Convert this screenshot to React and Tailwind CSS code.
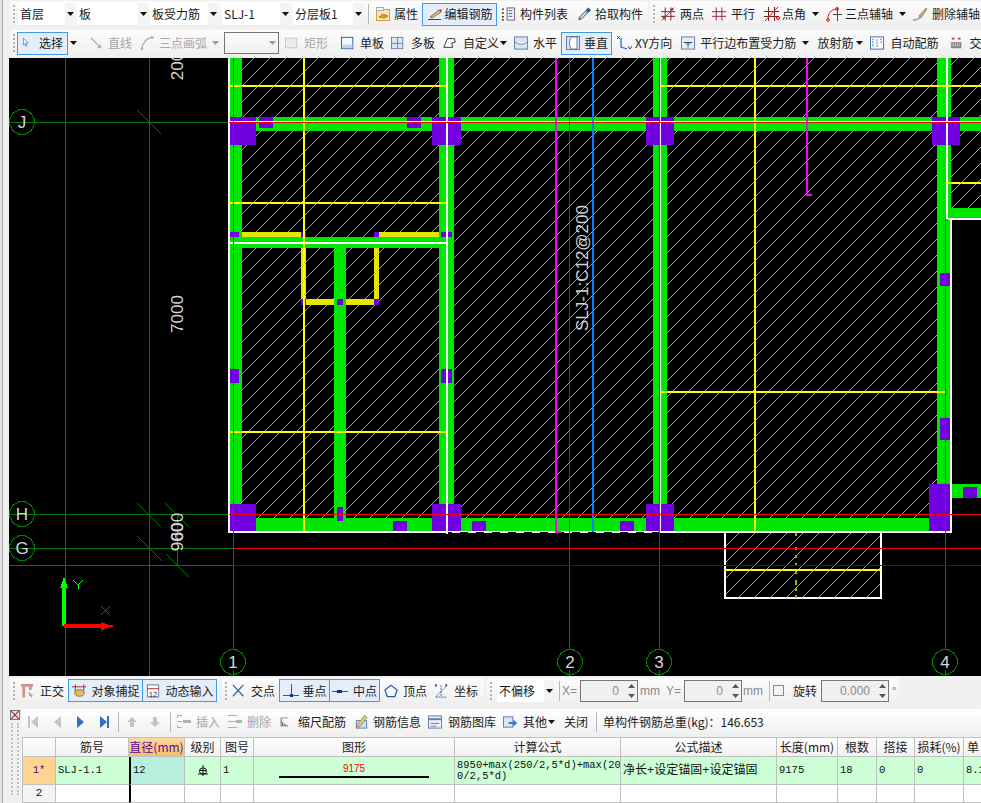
import React from 'react';
import clsx from 'clsx';

const cn = '[font-family:"Noto_Sans_CJK_SC","Liberation_Sans",sans-serif]';
const mono = '[font-family:"Liberation_Mono","Noto_Sans_CJK_SC",monospace]';

// canvas data, all in screenshot coordinates [x, y, w, h]
const greens = [
  [229, 58, 13, 474], [439, 58, 15, 474], [653, 58, 14, 474], [937, 58, 14, 161], [937, 219, 13, 312],
  [334, 247, 12, 271], [229, 117, 752, 14], [229, 237, 218, 11], [229, 518, 721, 13], [950, 208, 31, 10], [950, 484, 31, 14],
];
const purples = [
  [229, 117, 27, 28], [259, 117, 14, 11], [407, 117, 14, 11], [432, 117, 29, 28], [646, 117, 28, 28], [932, 117, 28, 28],
  [940, 273, 10, 13], [940, 418, 10, 22], [229, 232, 10, 5], [301, 232, 5, 5], [374, 232, 5, 5], [441, 232, 11, 5],
  [301, 299, 5, 6], [337, 299, 6, 6], [374, 299, 5, 6], [229, 369, 10, 14], [441, 369, 11, 14], [337, 507, 6, 14],
  [393, 521, 14, 10], [472, 521, 14, 10], [620, 521, 14, 10], [229, 504, 27, 27], [432, 504, 29, 27], [646, 504, 28, 27],
  [929, 484, 21, 47], [963, 487, 14, 11],
];
const yellowBars = [
  [242, 232, 59, 5], [379, 232, 60, 5], [301, 248, 5, 51], [374, 248, 5, 51], [306, 299, 28, 6], [346, 299, 28, 6],
];
const yellowLines = [
  [228, 85, 219, 2], [660, 85, 321, 2], [228, 202, 219, 2], [303, 58, 2, 474], [228, 431, 219, 2], [754, 58, 2, 474],
  [660, 391, 285, 2], [946, 182, 35, 2], [724, 569, 157, 2],
];
const whites = [
  [228, 58, 2, 475], [446, 58, 2, 476], [660, 58, 1, 475], [946, 58, 2, 161], [950, 219, 2, 314], [948, 218, 33, 2],
  [228, 242, 219, 2], [228, 531, 219, 2], [659, 531, 293, 2], [447, 531, 212, 1], [228, 121, 753, 1],
  [724, 532, 2, 67], [880, 532, 2, 67], [724, 597, 158, 2],
];
const axisLabels = [
  ['J', 22, 122], ['H', 22, 514], ['G', 22, 548], ['1', 233, 662], ['2', 570, 662], ['3', 659, 662], ['4', 945, 662],
];

const Rects = ({ items, fill }) => items.map((r, i) => (
  <rect key={i} x={r[0]} y={r[1]} width={r[2]} height={r[3]} fill={fill} />
));

const ring = (cx, cy) => {
  const pts = [];
  for (let i = 0; i < 12; i += 1) {
    const a = (i * Math.PI) / 6 + 0.26;
    pts.push(`${(cx + 12.5 * Math.cos(a)).toFixed(1)},${(cy + 12.5 * Math.sin(a)).toFixed(1)}`);
  }
  return pts.join(' ');
};

const Drawing = () => (
  <svg className="block w-[972px] h-[618px] shrink-0 bg-black" viewBox="9 58 972 618" shapeRendering="crispEdges">
    <defs>
      <pattern id="hatch" patternUnits="userSpaceOnUse" width="16" height="16" x="2" y="6">
        <line x1="0" y1="16" x2="16" y2="0" stroke="#a4a4a4" strokeWidth="1" />
      </pattern>
    </defs>
    {/* slab hatch */}
    <rect x="229" y="58" width="752" height="474" fill="url(#hatch)" />
    <rect x="952" y="219" width="29" height="320" fill="#000" />
    <rect x="725" y="533" width="156" height="65" fill="url(#hatch)" />

    {/* grid axes */}
    <g fill="#007a00">
      <rect x="9" y="122" width="220" height="1" />
      <rect x="9" y="514" width="220" height="1" />
      <rect x="9" y="548" width="224" height="1" />
      <rect x="9" y="565" width="224" height="1" />
      <rect x="65" y="58" width="1" height="618" />
      <rect x="149" y="58" width="1" height="618" />
      <rect x="177" y="514" width="1" height="52" />
    </g>
    <g stroke="#007a00" strokeWidth="1">
      <line x1="137" y1="110" x2="161" y2="134" />
      <line x1="137" y1="503" x2="161" y2="527" />
      <line x1="137" y1="536" x2="162" y2="561" />
      <line x1="165" y1="503" x2="189" y2="527" />
      <line x1="166" y1="554" x2="189" y2="577" />
    </g>

    <Rects items={greens} fill="#00e600" />
    <Rects items={purples} fill="#7000e0" />
    <Rects items={yellowBars} fill="#e6e600" />
    <Rects items={whites} fill="#fff" />
    <g fill="#fff">
      {[452, 468, 484, 500, 516, 532, 548, 564, 580, 596, 612, 628, 644].map((x) => <rect key={x} x={x} y="532" width="8" height="1" />)}
    </g>
    <Rects items={yellowLines} fill="#ffff00" />
    <g fill="#b0b000">
      {[533, 547, 555, 563, 571, 580, 588, 595].map((y) => <rect key={y} x="795" y={y} width="2" height={y === 580 ? 5 : 3} />)}
    </g>

    {/* bars */}
    <rect x="555" y="58" width="2" height="474" fill="#ff00ff" />
    <rect x="555" y="531" width="6" height="2" fill="#ff00ff" />
    <rect x="806" y="58" width="2" height="137" fill="#ff00ff" />
    <rect x="806" y="194" width="6" height="2" fill="#ff00ff" />
    <rect x="592" y="58" width="2" height="474" fill="#0080ff" />

    <g fill="#f00000">
      <rect x="233" y="58" width="1" height="592" />
      <rect x="569" y="58" width="1" height="592" />
      <rect x="659" y="58" width="1" height="592" />
      <rect x="945" y="219" width="1" height="431" />
      <rect x="229" y="122" width="752" height="1" />
      <rect x="229" y="514" width="752" height="1" />
      <rect x="233" y="548" width="748" height="1" />
      <rect x="233" y="670" width="1" height="6" />
      <rect x="569" y="670" width="1" height="6" />
      <rect x="659" y="670" width="1" height="6" />
      <rect x="945" y="670" width="1" height="6" />
    </g>
    <rect x="233" y="565" width="748" height="1" fill="#800000" />

    {/* axis bubbles */}
    {axisLabels.map(([t, x, y]) => (
      <g key={t}>
        <polygon points={ring(x, y)} fill="none" stroke="#008000" strokeWidth="1" />
        <text x={x} y={y + 6} textAnchor="middle" fontSize="17" fill="#d8d8d8" fontFamily="Liberation Sans, sans-serif">{t}</text>
      </g>
    ))}

    {/* dimension texts */}
    <g fill="#d4d4d4" fontSize="17" fontFamily="Liberation Sans, sans-serif" textAnchor="middle">
      <text transform="translate(183 66) rotate(-90)">200</text>
      <text transform="translate(183 314) rotate(-90)">7000</text>
      <text transform="translate(183 537) rotate(-90)">900</text>
      <text transform="translate(183 527) rotate(-90)">600</text>
      <text transform="translate(588 268) rotate(-90)">SLJ-1:C12@200</text>
    </g>

    {/* ucs */}
    <rect x="62" y="583" width="4" height="43" fill="#00ff00" />
    <polygon points="64,577 68,588 60,588" fill="#00ff00" />
    <rect x="64" y="624" width="38" height="4" fill="#ff0000" />
    <polygon points="101,622 109,625 113,625 113,627 109,627 101,631" fill="#ff0000" />
    <g stroke="#00ff00">
      <line x1="73" y1="580" x2="78" y2="585" />
      <line x1="83" y1="580" x2="78" y2="585" />
      <line x1="78" y1="585" x2="78" y2="589" />
    </g>
    <g stroke="#ff0000">
      <line x1="101" y1="606" x2="110" y2="615" />
      <line x1="110" y1="606" x2="101" y2="615" />
    </g>
  </svg>
);

// small toolbar icons
const Ico = ({ w = 16, children }) => (
  <svg className="shrink-0 block" width={w} height="16" viewBox="0 0 16 16" fill="none">{children}</svg>
);
const grayA = '#b0b0b0';
const icons = {
  prop: <Ico><rect x="1.500" y="3.500" width="13" height="11" fill="#fbe3b4" stroke="#e59a3c" /><rect x="1.500" y="1.500" width="7" height="3" fill="#f4f4f4" stroke="#aaa" /><path d="M4 11l4-3 5 2-4 2z" fill="#c9a227" stroke="#7a5f10" strokeWidth=".6" /></Ico>,
  pen: <Ico><path d="M1 13.500h13" stroke="#444" /><path d="M3 11l9-7 2 2-9 6z" fill="#e8c36a" stroke="#555" strokeWidth=".8" /><path d="M12 4l2-1 1 2-1 1z" fill="#d04040" /></Ico>,
  list: <Ico w={15}><rect x="6.500" y="1.500" width="8" height="13" fill="#eef3fa" stroke="#667" /><path d="M8 4.500h4M8 7.500h4M8 10.500h4" stroke="#557" /><path d="M1 3h2M1 7h2M1 11h2M1 14h2" stroke="#334" strokeWidth="1.600" strokeDasharray="2 1" /></Ico>,
  dropper: <Ico w={15}><path d="M2 14l1-3 6-6 2 2-6 6z" fill="#cfe3f7" stroke="#345" /><path d="M9 4l3-3 3 3-3 3z" fill="#2b5c9a" /></Ico>,
  twoPt: <Ico w={15}><path d="M4.500 1v14M10.500 1v14M0 5.500h15M0 10.500h15" stroke="#7a1f1f" /><path d="M1 15L14 1" stroke="#1a8a1a" /><circle cx="3" cy="12" r="1.200" fill="#c00" /><circle cx="12" cy="3" r="1.200" fill="#c00" /></Ico>,
  para: <Ico w={15}><path d="M4.500 1v14M10.500 1v14M0 5.500h15M0 10.500h15" stroke="#9b1c3c" /></Ico>,
  angle: <Ico><path d="M4.500 1v14M10.500 1v14M0 5.500h15M0 10.500h15" stroke="#7a1f1f" /><path d="M1 15L14 1" stroke="#e01010" /><circle cx="14" cy="12" r="1.500" stroke="#c00" /></Ico>,
  arcAxis: <Ico><path d="M2 15C1 8 5 3 11 3" stroke="#e01010" /><circle cx="2" cy="14" r="1.300" fill="#fff" stroke="#c00" /><circle cx="11" cy="3" r="1.300" fill="#fff" stroke="#c00" /><path d="M11.500 1v14M7 8.500h9" stroke="#444" /></Ico>,
  brush: <Ico><path d="M1 14c3 0 5 0 7-3" stroke="#9ab" strokeWidth="2" /><path d="M7 10l7-8 1 1-6 9z" fill="#d6b25a" stroke="#665" strokeWidth=".6" /></Ico>,
  cursor: <Ico w={11}><path d="M2 1l7 7H5.500L7 12l-1.500.6L4 9l-2 2z" fill="#fff" stroke="#4a6a9a" /></Ico>,
  line: <Ico w={14}><path d="M1 2l11 11" stroke={grayA} strokeWidth="1.500" /><path d="M13 14l-5-1 4-4z" fill={grayA} /></Ico>,
  arc: <Ico w={15}><path d="M2 14C3 7 7 3 13 2" stroke={grayA} strokeWidth="1.500" /><circle cx="2" cy="14" r="1.500" fill={grayA} /><circle cx="13" cy="2" r="1.500" fill={grayA} /></Ico>,
  rect: <Ico w={14}><rect x=".5" y="2.500" width="13" height="11" fill="#ececec" stroke="#c4c4c4" /></Ico>,
  single: <Ico w={14}><rect x=".5" y="1.500" width="13" height="13" fill="#f4f8fd" stroke="#1f4e9c" /><rect x="1" y="10" width="12" height="4" fill="#bcd3f0" /></Ico>,
  multi: <Ico w={14}><rect x=".5" y="1.500" width="13" height="13" fill="#dbe7f6" stroke="#5f7da8" /><path d="M7.500 2v12M1 8.500h12" stroke="#5f7da8" /></Ico>,
  custom: <Ico w={14}><path d="M1 13L5 3h8l1 4-4 1 1 5z" fill="#fff" stroke="#222" /></Ico>,
  horiz: <Ico w={15}><rect x=".5" y="1.500" width="14" height="13" fill="#d9e6f5" stroke="#5f7da8" /><path d="M1 7c4 3 9 3 13 0" fill="#fff" stroke="#5f7da8" /></Ico>,
  vert: <Ico><rect x="1.500" y="1.500" width="13" height="13" fill="#d9e6f5" stroke="#5f7da8" /><path d="M6 2c-2 4-2 8 0 12h6V2z" fill="#fff" stroke="#5f7da8" /></Ico>,
  xy: <Ico><path d="M5 3v9l6 2" stroke="#2d6fc0" strokeWidth="1.300" /><path d="M1 1l3 3M4 1L1 4M12 11l2 3 2-3" stroke="#222" strokeWidth=".8" /></Ico>,
  edge: <Ico w={15}><rect x=".5" y="1.500" width="14" height="13" fill="#e4eefa" stroke="#5f7da8" /><path d="M3 7.500h9" stroke="#333" /><path d="M7.500 8v5M5.500 10l2-2 2 2" stroke="#2d6fc0" /></Ico>,
  auto: <Ico w={15}><rect x=".5" y="1.500" width="14" height="13" fill="#fff" stroke="#3c66a8" /><path d="M4 4H3v8h1M7.500 4v8M11 4h1v4" stroke="#3c66a8" strokeDasharray="2 1" /></Ico>,
  crossTb: <Ico w={14}><rect x="1" y="7" width="12" height="7" fill="#888" /><path d="M2 9h10M2 11h10" stroke="#fff" strokeDasharray="1 1" /><path d="M2 3h3M9 3h3" stroke="#c33" strokeWidth="2" /></Ico>,
  ortho: <Ico w={15}><path d="M1 2h13M4 2v13M11 2v5" stroke="#d89090" strokeWidth="3" /><path d="M9 9l4 4-1 1-2-2" fill="#99aabb" stroke="#667" strokeWidth=".6" /></Ico>,
  snap: <Ico w={15}><path d="M3.500 1v9M12.500 1v9M0 3.500h15" stroke="#8a3030" /><ellipse cx="8" cy="10" rx="5" ry="3.600" fill="#e2b860" stroke="#9a7a30" /></Ico>,
  dyn: <Ico w={15}><rect x="1.500" y="1.500" width="12" height="13" fill="#fff" stroke="#777" /><path d="M1 5.500h13" stroke="#a33" /><text x="3" y="14" fontSize="8" fill="#222" fontFamily="Liberation Sans, sans-serif">12</text></Ico>,
  cross: <Ico w={14}><path d="M1 1l12 13M13 1L1 14" stroke="#225ea8" strokeWidth="1.300" /></Ico>,
  foot: <Ico><path d="M0 12.500h16" stroke="#225ea8" /><path d="M8.500 1v11" stroke="#225ea8" /><rect x="7" y="11" width="3" height="3" fill="#123a70" /></Ico>,
  mid: <Ico><path d="M0 8.500h16" stroke="#225ea8" /><rect x="5" y="7" width="5" height="3" fill="#123a70" /></Ico>,
  vertex: <Ico w={15}><path d="M7.500 2L14 7l-2.500 7h-8L1 7z" stroke="#225ea8" strokeWidth="1.300" /></Ico>,
  coord: <Ico w={15}><path d="M2 14.500h12M7.500 2v12M2 14L13 3" stroke="#225ea8" strokeDasharray="2 1" /><rect x="1" y="1" width="2" height="2" fill="#123a70" /><rect x="12" y="1" width="2" height="2" fill="#123a70" /></Ico>,
  ins: <Ico><path d="M1 1.500h5M1 7.500h5M1 13.500h5M1.500 1v3M1.500 11v3" stroke={grayA} /><path d="M7 7.500h8" stroke={grayA} strokeWidth="3" /></Ico>,
  del: <Ico><path d="M1 1.500h9M1 7.500h9M1 13.500h9" stroke={grayA} /><path d="M9 7.500h6" stroke={grayA} strokeWidth="3" /></Ico>,
  scale: <Ico w={12}><path d="M1.500 2v12M3.500 8v6M5.500 10v4M7.500 11v3M9.500 12v2" stroke="#333" /><path d="M3 2.500h8" stroke="#a33" strokeDasharray="3 1" /></Ico>,
  info: <Ico w={15}><rect x="2.500" y="6.500" width="11" height="8" fill="#cfe0f3" stroke="#5f7da8" /><path d="M2 13L11 1l3 2-8 10z" fill="#e6c66f" stroke="#776" strokeWidth=".7" /></Ico>,
  lib: <Ico w={15}><rect x=".5" y="1.500" width="14" height="13" fill="#e8eff8" stroke="#5f7da8" /><path d="M1 5h13" stroke="#5f7da8" strokeWidth="2" /><path d="M3 9.500h9M3 12.500h6" stroke="#776" /></Ico>,
  other: <Ico w={15}><rect x=".5" y="2.500" width="10" height="11" fill="#dbe7f6" stroke="#5f7da8" /><path d="M6 8h5V5l4 4-4 4v-3H6z" fill="#3a78c8" /></Ico>,
};

const Caret = ({ className, gray }) => (
  <svg className={clsx('shrink-0 block', className)} width="7" height="4" viewBox="0 0 7 4"><path d="M0 0h7L3.500 4z" fill={gray ? '#9a9a9a' : '#111'} /></svg>
);
const Grip = ({ className }) => <div className={clsx('h-[18px] w-[2px] border-l-2 border-dotted border-[#b0b0b0]', className)} />;
const Sep = ({ className }) => <div className={clsx('h-[20px] w-px bg-[#b8b8b8]', className)} />;

const Btn = ({ icon, label, gap = 'gap-[4px]', className, on, off }) => (
  <div className={clsx(
    'flex items-center h-[23px] shrink-0 whitespace-nowrap text-[12px] leading-none', gap,
    on && 'border border-[#3d9be9] bg-[#e3eefa] justify-center',
    off ? 'text-[#a6a6a6]' : 'text-[#1c1c1c]',
    className,
  )}>
    {icon}
    {label && <span>{label}</span>}
  </div>
);

const Combo = ({ label, className }) => (
  <div className={clsx('flex h-[22px] shrink-0 bg-white text-[12px] text-[#1c1c1c] leading-none whitespace-nowrap', className)}>
    <span className="flex-1 flex items-center pl-[2px]">{label}</span>
    <span className="w-[10px] bg-[#f3f3f3] flex items-center justify-center"><Caret /></span>
  </div>
);

const Bar = ({ className, children }) => (
  <div className={clsx('flex items-center h-[26px] shrink-0 rounded-[2px] bg-linear-to-b from-[#fcfcfc] to-[#efefef]', className)}>{children}</div>
);

const Spin = ({ value, className }) => (
  <div className={clsx('flex items-center h-[22px] shrink-0 border border-[#767676] bg-[#f0f0f0] text-[12px] text-[#8a8a8a]', className)}>
    <span className="flex-1 text-right pr-[6px] [font-family:'Liberation_Sans',sans-serif]">{value}</span>
    <span className="w-[12px] flex flex-col items-center gap-[6px]">
      <svg width="7" height="4" viewBox="0 0 7 4"><path d="M3.500 0L7 4H0z" fill="#555" /></svg>
      <svg width="7" height="4" viewBox="0 0 7 4"><path d="M0 0h7L3.500 4z" fill="#555" /></svg>
    </span>
  </div>
);

const TopToolbars = () => (
  <div className={clsx('h-[58px] shrink-0 overflow-hidden bg-[#f0f0f0]', cn)}>
    <div className="flex h-[28px] pt-px">
      <Bar className="ml-px w-[638px]">
        <Grip className="ml-[3px]" />
        <Combo label="首层" className="ml-[3px] w-[57px]" />
        <Combo label="板" className="ml-[2px] w-[71px]" />
        <Combo label="板受力筋" className="ml-[2px] w-[68px]" />
        <Combo label="SLJ-1" className="ml-[4px] w-[68px]" />
        <Combo label="分层板1" className="ml-[3px] w-[70px]" />
        <Sep className="ml-[5px]" />
        <Btn icon={icons.prop} label="属性" gap="gap-[3px]" className="ml-[6px]" />
        <Btn icon={icons.pen} label="编辑钢筋" gap="gap-[2px]" on className="ml-[4px] w-[75px]" />
        <Btn icon={icons.list} label="构件列表" className="ml-[4px]" />
        <Btn icon={icons.dropper} label="拾取构件" gap="gap-[3px]" className="ml-[9px]" />
      </Bar>
      <Bar className="ml-[2px] w-[331px]">
        <Grip className="ml-[3px]" />
        <Btn icon={icons.twoPt} label="两点" className="ml-[6px]" />
        <Btn icon={icons.para} label="平行" className="ml-[8px]" />
        <Btn icon={icons.angle} label="点角" gap="gap-[2px]" className="ml-[9px]" />
        <Caret className="ml-[6px]" />
        <Btn icon={icons.arcAxis} label="三点辅轴" gap="gap-[3px]" className="ml-[7px]" />
        <Caret className="ml-[6px]" />
        <Btn icon={icons.brush} label="删除辅轴" className="ml-[6px]" />
      </Bar>
    </div>
    <div className="flex h-[30px] pt-[2px]">
      <Bar className="ml-px w-[971px]">
        <Grip className="ml-[3px]" />
        <Btn icon={icons.cursor} label="选择" gap="gap-[6px]" on className="ml-[2px] w-[51px]" />
        <Caret className="ml-[2px]" />
        <Sep className="ml-[6px]" />
        <Btn icon={icons.line} label="直线" off className="ml-[7px]" />
        <Btn icon={icons.arc} label="三点画弧" off className="ml-[8px]" />
        <Caret gray className="ml-[5px]" />
        <div className="ml-[5px] w-[55px] h-[22px] shrink-0 border border-[#767676] flex items-center justify-end pr-[2px]"><Caret gray /></div>
        <Btn icon={icons.rect} label="矩形" gap="gap-[5px]" off className="ml-[6px]" />
        <Sep className="ml-[7px]" />
        <Btn icon={icons.single} label="单板" gap="gap-[5px]" className="ml-[6px]" />
        <Btn icon={icons.multi} label="多板" gap="gap-[6px]" className="ml-[7px]" />
        <Btn icon={icons.custom} label="自定义" gap="gap-[6px]" className="ml-[8px]" />
        <Caret className="ml-px" />
        <Btn icon={icons.horiz} label="水平" className="ml-[7px]" />
        <Btn icon={icons.vert} label="垂直" gap="gap-[3px]" on className="ml-[4px] w-[51px]" />
        <Btn icon={icons.xy} label="XY方向" gap="gap-[3px]" className="ml-[4px]" />
        <Btn icon={icons.edge} label="平行边布置受力筋" className="ml-[9px]" />
        <Caret className="ml-[6px]" />
        <Btn label="放射筋" className="ml-[8px]" />
        <Caret className="ml-[3px]" />
        <Btn icon={icons.auto} label="自动配筋" gap="gap-[5px]" className="ml-[7px]" />
        <Sep className="ml-[7px]" />
        <Btn icon={icons.crossTb} label="交" gap="gap-[5px]" className="ml-[5px]" />
      </Bar>
    </div>
  </div>
);

const SnapToolbar = () => (
  <div className={clsx('flex items-center h-[32px] pb-[3px] shrink-0 bg-[#f0f0f0]', cn)}>
    <Bar className="ml-px w-[209px]">
      <Grip className="ml-[3px]" />
      <Btn icon={icons.ortho} label="正交" gap="gap-[5px]" className="ml-[5px]" />
      <Btn icon={icons.snap} label="对象捕捉" gap="gap-[5px]" on className="ml-[4px] w-[75px]" />
      <Btn icon={icons.dyn} label="动态输入" gap="gap-[5px]" on className="w-[75px] -ml-px" />
    </Bar>
    <Bar className="ml-[3px] w-[262px]">
      <Grip className="ml-[3px]" />
      <Btn icon={icons.cross} label="交点" gap="gap-[5px]" className="ml-[5px]" />
      <Btn icon={icons.foot} label="垂点" on className="ml-[4px] w-[51px]" />
      <Btn icon={icons.mid} label="中点" gap="gap-[5px]" on className="w-[51px] -ml-px" />
      <Btn icon={icons.vertex} label="顶点" className="ml-[4px]" />
      <Btn icon={icons.coord} label="坐标" gap="gap-[5px]" className="ml-[7px]" />
    </Bar>
    <Bar className="ml-[3px] w-[412px]">
      <Grip className="ml-[3px]" />
      <Combo label="不偏移" className="ml-[5px] w-[57px]" />
      <Sep className="ml-[5px]" />
      <span className="ml-[2px] w-[17px] text-[12px] text-[#8a8a8a] [font-family:'Liberation_Sans',sans-serif]">X=</span>
      <Spin value="0" className="ml-px w-[58px]" />
      <span className="ml-[2px] w-[24px] text-[12px] text-[#8a8a8a] [font-family:'Liberation_Sans',sans-serif]">mm</span>
      <span className="ml-[2px] w-[18px] text-[12px] text-[#8a8a8a] [font-family:'Liberation_Sans',sans-serif]">Y=</span>
      <Spin value="0" className="w-[58px]" />
      <span className="ml-px w-[24px] text-[12px] text-[#8a8a8a] [font-family:'Liberation_Sans',sans-serif]">mm</span>
      <Sep className="ml-[2px]" />
      <div className="ml-[3px] w-[11px] h-[11px] shrink-0 border border-[#8a8a8a] bg-[#f4f4f4]" />
      <span className="ml-[9px] text-[12px] text-[#1c1c1c] whitespace-nowrap">旋转</span>
      <Spin value="0.000" className="ml-[4px] w-[68px]" />
      <span className="ml-[3px] text-[12px] text-[#777]">°</span>
    </Bar>
  </div>
);

const GRID = 'grid grid-cols-[33px_73px_56px_36px_33px_201px_166px_156px_61px_39px_38px_49px_40px]';
const cell = 'border-r border-b border-[#c0c0c0] flex items-center overflow-hidden whitespace-nowrap';
const headers = ['', '筋号', '直径(mm)', '级别', '图号', '图形', '计算公式', '公式描述', '长度(mm)', '根数', '搭接', '损耗(%)', '单'];

const RebarTable = () => (
  <div className="w-[959px] overflow-hidden border-t border-l border-[#c0c0c0] bg-white">
    <div className={clsx(GRID, 'h-[19px]')}>
      {headers.map((h, i) => (
        <div
          key={i}
          className={clsx(
            cell, 'justify-center text-[12px] leading-none',
            i === 2 ? 'bg-linear-to-b from-[#fbd9a0] to-[#f4bf6a] text-[#5a0a8c]' : 'bg-linear-to-b from-white to-[#f1f1f1] text-[#1c1c1c]',
            i === 12 && 'justify-start pl-[3px]',
          )}
        >
          {h}
        </div>
      ))}
    </div>
    <div className={clsx(GRID, 'h-[28px] text-[10.5px] text-[#111] bg-[#ccffd6]', mono)}>
      <div className={clsx(cell, 'justify-center bg-[#ffd490] text-[#5a0a8c]')}>1*</div>
      <div className={clsx(cell, 'pl-[2px] border-r-0')}>SLJ-1.1</div>
      <div className={clsx(cell, 'pl-[2px] bg-[#b6f0dc] border-l-2 border-l-black')}>12</div>
      <div className={clsx(cell, 'justify-center')}>
        <svg width="10" height="11" viewBox="0 0 10 11" fill="none"><path d="M5 0v11M2 5.500h6M0 9h10" stroke="#111" /><rect x="1.500" y="3" width="7" height="6" rx="3" stroke="#111" /></svg>
      </div>
      <div className={clsx(cell, 'pl-[2px]')}>1</div>
      <div className={clsx(cell, 'flex-col justify-center')}>
        <span className="text-[#f00000] text-[10px] leading-[12px] [font-family:'Liberation_Sans',sans-serif]">9175</span>
        <span className="block w-[150px] h-[2px] bg-black mt-[1px]" />
      </div>
      <div className={clsx(cell, 'pl-[2px] leading-[11px] whitespace-pre')}>{'8950+max(250/2,5*d)+max(20\n0/2,5*d)'}</div>
      <div className={clsx(cell, 'pl-[2px] text-[12px]')}>净长+设定锚固+设定锚固</div>
      <div className={clsx(cell, 'pl-[2px]')}>9175</div>
      <div className={clsx(cell, 'pl-[2px]')}>18</div>
      <div className={clsx(cell, 'pl-[2px]')}>0</div>
      <div className={clsx(cell, 'pl-[2px]')}>0</div>
      <div className={clsx(cell, 'pl-[2px]')}>8.18</div>
    </div>
    <div className={clsx(GRID, 'h-[18px] text-[11px] text-[#111]', mono)}>
      <div className={clsx(cell, 'justify-center bg-[#f3f3f3]')}>2</div>
      <div className={clsx(cell, 'border-r-0')} />
      <div className={clsx(cell, 'border-l-2 border-l-black')} />
      {[0, 1, 2, 3, 4, 5, 6, 7, 8, 9].map((i) => <div key={i} className={cell} />)}
    </div>
  </div>
);

const RebarPanel = () => (
  <div className={clsx('flex h-[95px] shrink-0 bg-[#f0f0f0]', cn)}>
    <div className="w-[13px] shrink-0 pl-px pt-[2px] bg-[#f0f0f0]">
      <div className="w-[10px] h-[10px] border border-[#777] bg-[#e8e0e0] flex items-center justify-center">
        <svg width="8" height="8" viewBox="0 0 8 8"><path d="M0 0l8 8M8 0L0 8" stroke="#b03030" strokeWidth="1.200" /></svg>
      </div>
      <div className="mt-[3px] ml-px w-[8px] h-[72px] border-x-2 border-dotted border-[#c4c4c4]" />
    </div>
    <div className="flex-1 min-w-0 pt-px">
      <div className="flex items-center h-[26px] bg-linear-to-b from-white to-[#f0f0f0]">
        <svg className="ml-[6px] shrink-0" width="10" height="12" viewBox="0 0 10 12"><path d="M0 0h2v12H0zM10 0v12L3 6z" fill="#c4c4c4" /></svg>
        <svg className="ml-[16px] shrink-0" width="7" height="12" viewBox="0 0 7 12"><path d="M7 0v12L0 6z" fill="#c4c4c4" /></svg>
        <svg className="ml-[16px] shrink-0" width="7" height="12" viewBox="0 0 7 12"><path d="M0 0v12l7-6z" fill="#2f6fc4" /></svg>
        <svg className="ml-[16px] shrink-0" width="9" height="12" viewBox="0 0 9 12"><path d="M0 0v12l7-6zM7 0h2v12H7z" fill="#2f6fc4" /></svg>
        <Sep className="ml-[9px]" />
        <svg className="ml-[8px] shrink-0" width="10" height="10" viewBox="0 0 10 10"><path d="M5 0l5 5H7v5H3V5H0z" fill="#c4c4c4" /></svg>
        <svg className="ml-[13px] shrink-0" width="10" height="10" viewBox="0 0 10 10"><path d="M5 10L0 5h3V0h4v5h3z" fill="#c4c4c4" /></svg>
        <Sep className="ml-[10px]" />
        <Btn icon={icons.ins} label="插入" off className="ml-[5px]" />
        <Btn icon={icons.del} label="删除" off className="ml-[7px]" />
        <Btn icon={icons.scale} label="缩尺配筋" gap="gap-[6px]" className="ml-[9px]" />
        <Btn icon={icons.info} label="钢筋信息" className="ml-[8px]" />
        <Btn icon={icons.lib} label="钢筋图库" gap="gap-[5px]" className="ml-[7px]" />
        <Btn icon={icons.other} label="其他" gap="gap-[5px]" className="ml-[7px]" />
        <Caret className="ml-px" />
        <Btn label="关闭" className="ml-[9px]" />
        <Sep className="ml-[8px]" />
        <span className="ml-[6px] text-[12px] text-[#1c1c1c] whitespace-nowrap">单构件钢筋总重(kg)：146.653</span>
      </div>
      <div className="pt-[2px]">
        <RebarTable />
      </div>
    </div>
  </div>
);

export default function App() {
  return (
    <div className="flex w-[981px] h-[803px] overflow-hidden bg-[#f0f0f0]">
      <div className="w-[9px] shrink-0 bg-[#f0f0f0] flex">
        <div className="w-[2px] bg-[#e4e4e4]" />
        <div className="w-px bg-[#a8a8a8]" />
      </div>
      <div className="flex flex-col w-[972px] min-w-0">
        <TopToolbars />
        <Drawing />
        <SnapToolbar />
        <RebarPanel />
      </div>
    </div>
  );
}
